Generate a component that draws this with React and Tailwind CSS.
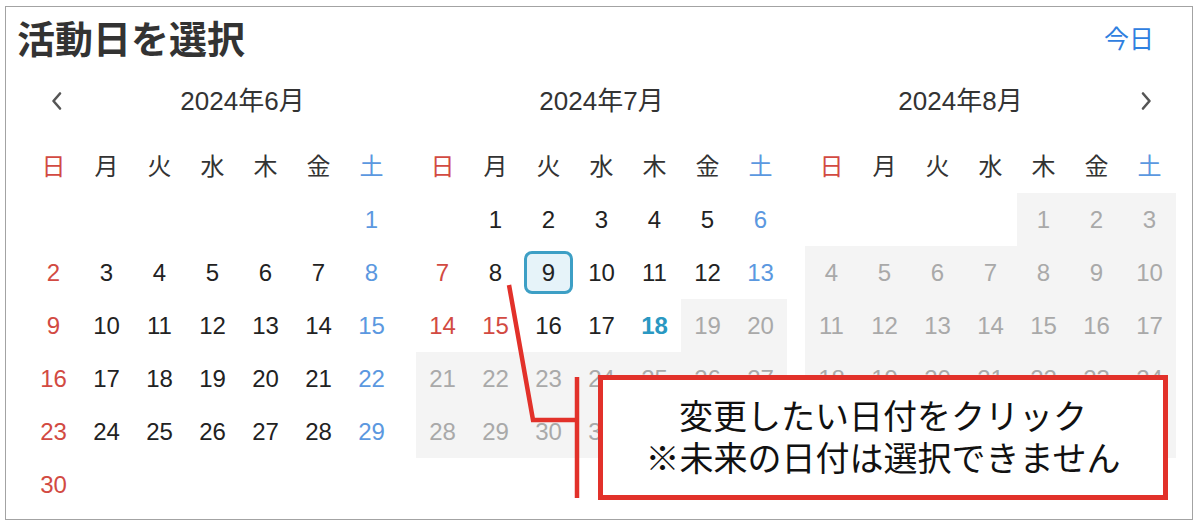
import React from 'react'

const FONT = "font-['Liberation_Sans','Noto_Sans_CJK_JP',sans-serif]"
const WEEKDAYS = ['日', '月', '火', '水', '木', '金', '土']

// 2024-07-18 is "today"; later dates are disabled
const TODAY = { m: 6, d: 18 }
const SELECTED = { m: 6, d: 9 }
const HOLIDAYS = { 6: [15] }

const isFuture = (m, d) => m > TODAY.m || (m === TODAY.m && d > TODAY.d)

const buildMonth = (year, month) => {
  const first = new Date(year, month, 1).getDay()
  const days = new Date(year, month + 1, 0).getDate()
  const cells = Array(first).fill(null)
  for (let d = 1; d <= days; d++) cells.push(d)
  while (cells.length % 7) cells.push(null)
  return { cells, days }
}

const ChevronLeft = () => (
  <svg width="14" height="20" viewBox="0 0 14 20" fill="none">
    <path d="M10 2.5 L3.5 10 L10 17.5" stroke="#555" strokeWidth="2.6" strokeLinecap="round" strokeLinejoin="round" />
  </svg>
)

const ChevronRight = () => (
  <svg width="14" height="20" viewBox="0 0 14 20" fill="none">
    <path d="M4 2.5 L10.5 10 L4 17.5" stroke="#555" strokeWidth="2.6" strokeLinecap="round" strokeLinejoin="round" />
  </svg>
)

const DayCell = ({ month, day, index, trailingFuture }) => {
  const col = index % 7
  if (day == null) {
    return <div className={`h-[53px] ${trailingFuture ? 'bg-[#f4f4f4]' : ''}`} />
  }
  const future = isFuture(month, day)
  const isToday = month === TODAY.m && day === TODAY.d
  const selected = month === SELECTED.m && day === SELECTED.d
  const holiday = (HOLIDAYS[month] || []).includes(day)

  let color = 'text-[#222]'
  if (future) color = 'text-[#a9a9a9]'
  else if (isToday) color = 'text-[#2a98c2] font-bold'
  else if (col === 0 || holiday) color = 'text-[#d24a42]'
  else if (col === 6) color = 'text-[#5b98e0]'

  return (
    <div className={`flex h-[53px] items-center justify-center ${future ? 'bg-[#f4f4f4]' : ''}`}>
      {selected ? (
        <span className="flex h-[43px] w-[49px] items-center justify-center rounded-[8px] border-[3px] border-[#3d9fc5] bg-[#e6f3f9] text-[24px] text-[#222]">
          {day}
        </span>
      ) : (
        <span className={`text-[24px] ${color}`}>{day}</span>
      )}
    </div>
  )
}

const Month = ({ year, month, prev, next }) => {
  const { cells, days } = buildMonth(year, month)
  const lastFuture = isFuture(month, days)
  return (
    <div className="w-[371px]">
      <div className="flex h-[40px] items-center">
        {prev && (
          <button type="button" className="flex h-full w-[60px] items-center justify-center">
            <ChevronLeft />
          </button>
        )}
        <div className="flex-1 text-center text-[26px] text-[#333]">
          {year}年{month + 1}月
        </div>
        {next && (
          <button type="button" className="flex h-full w-[60px] items-center justify-center">
            <ChevronRight />
          </button>
        )}
      </div>
      <div className="mt-[19px] grid grid-cols-[repeat(7,53px)]">
        {WEEKDAYS.map((w, i) => (
          <div
            key={w}
            className={`flex h-[53px] items-center justify-center text-[24px] ${
              i === 0 ? 'text-[#d24a42]' : i === 6 ? 'text-[#5b98e0]' : 'text-[#333]'
            }`}
          >
            {w}
          </div>
        ))}
        {cells.map((d, i) => (
          <DayCell
            key={i}
            month={month}
            day={d}
            index={i}
            trailingFuture={d == null && i > 6 && lastFuture}
          />
        ))}
      </div>
    </div>
  )
}

export default function App() {
  return (
    <div className={`relative h-[530px] w-[1200px] overflow-hidden bg-white ${FONT}`}>
      <div className="ml-[5px] mt-[6px] h-[514px] w-[1188px] border border-[#a3a3a3] bg-white">
        <div className="flex h-[66px] items-center justify-between pl-[11px] pr-[38px]">
          <h1 className="text-[38px] font-bold text-[#333]">活動日を選択</h1>
          <button type="button" className="text-[25px] text-[#2f80e0]">今日</button>
        </div>
        <div className="mt-[8px] flex gap-[18px] pl-[21px]">
          <Month year={2024} month={5} prev />
          <Month year={2024} month={6} />
          <Month year={2024} month={7} next />
        </div>
      </div>

      {/* callout */}
      <svg className="pointer-events-none absolute left-0 top-0" width="1200" height="530">
        <polyline points="509,285 533,420 577,420" fill="none" stroke="#e2312a" strokeWidth="4.5" />
        <line x1="577" y1="377" x2="577" y2="498" stroke="#e2312a" strokeWidth="4.5" />
      </svg>
      <div className="absolute left-[598px] top-[375px] flex h-[125px] w-[570px] flex-col items-center justify-center border-[5px] border-[#e2312a] bg-white text-[34px] leading-[42px] text-[#111]">
        <p>変更したい日付をクリック</p>
        <p>※未来の日付は選択できません</p>
      </div>
    </div>
  )
}
